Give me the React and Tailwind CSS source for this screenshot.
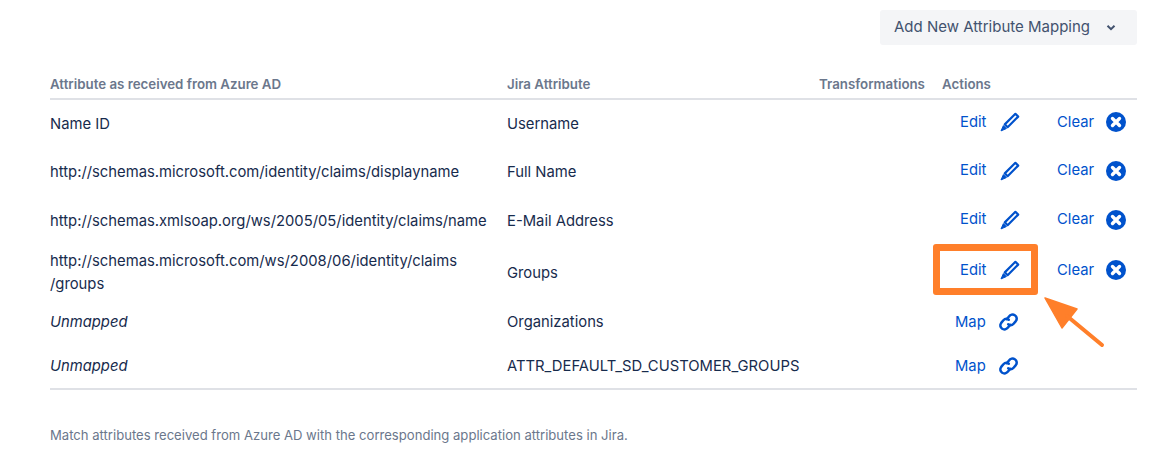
const font = { fontFamily: "Inter, 'Liberation Sans', sans-serif" };

const PencilIcon = () => (
  <svg width="20" height="20" viewBox="0 0 20 20" fill="none" stroke="#0052cc" strokeWidth="2.2" strokeLinejoin="round">
    <path d="M15.4 1.8 L18.2 4.6 L7.6 15.2 L4.8 12.4 Z" />
    <path d="M3.4 13.6 L6.4 16.6 L1 18.9 Z" fill="#0052cc" strokeWidth="1" />
  </svg>
);

const ClearIcon = () => (
  <svg width="20" height="20" viewBox="0 0 20 20">
    <circle cx="10" cy="10" r="10" fill="#0052cc" />
    <path d="M6.5 6.5 L13.5 13.5 M13.5 6.5 L6.5 13.5" stroke="#fff" strokeWidth="3.4" strokeLinecap="round" />
  </svg>
);

const LinkIcon = () => (
  <svg width="21" height="20" viewBox="0 0 21 20" fill="none" stroke="#0052cc" strokeWidth="2.5" strokeLinecap="round">
    <path d="M8.8 7.2 L11 4.4 C12.3 2.7 14.8 2 16.8 3.2 C18.9 4.6 19.3 7.2 17.8 9.1 L15.6 11.7 C14.2 13.3 11.9 13.6 10.2 12.3" />
    <path d="M12.2 12.8 L10 15.6 C8.7 17.3 6.2 18 4.2 16.8 C2.1 15.4 1.7 12.8 3.2 10.9 L5.4 8.3 C6.8 6.7 9.1 6.4 10.8 7.7" />
  </svg>
);

const rows = [
  { from: "Name ID", to: "Username", h: "h-[48px]", pb: "pb-[4px]", mapped: true },
  { from: "http://schemas.microsoft.com/identity/claims/displayname", to: "Full Name", h: "h-[49px]", pb: "pb-[4px]", mapped: true },
  { from: "http://schemas.xmlsoap.org/ws/2005/05/identity/claims/name", to: "E-Mail Address", h: "h-[49px]", pb: "pb-[4px]", mapped: true },
  { from: "http://schemas.microsoft.com/ws/2008/06/identity/claims\n/groups", to: "Groups", h: "h-[54px]", pb: "pb-[6px]", mapped: true },
  { from: "Unmapped", to: "Organizations", h: "h-[44px]", italic: true },
  { from: "Unmapped", to: "ATTR_DEFAULT_SD_CUSTOMER_GROUPS", h: "h-[44px]", italic: true },
];

const App = () => {
  return (
    <div className="relative w-[1171px] h-[460px] bg-white overflow-hidden" style={font}>
      <div className="ml-[50px] w-[1087px] pt-[10px]">
        <div className="flex justify-end">
          <button className="flex items-center w-[257px] h-[35px] pl-[14px] rounded-[3px] bg-[#f4f5f7] text-[#42526e] text-[15px]">
            Add New Attribute Mapping
            <svg className="ml-[16px]" width="10" height="8" viewBox="0 0 10 8" fill="none" stroke="#42526e" strokeWidth="2">
              <path d="M1.5 1.8 L5 5.2 L8.5 1.8" />
            </svg>
          </button>
        </div>

        <div className="flex items-center h-[27px] mt-[26px] text-[13.3px] font-semibold text-[#6b778c] border-b-2 border-[#dfe1e6] box-content">
          <div className="w-[457px]">Attribute as received from Azure AD</div>
          <div className="w-[312px]">Jira Attribute</div>
          <div className="w-[123px]">Transformations</div>
          <div>Actions</div>
        </div>

        {rows.map((row) => (
          <div key={row.to} className={`flex items-center ${row.h} text-[14.8px] leading-[23px] text-[#172b4d]`}>
            <div className={`w-[457px] whitespace-pre-line ${row.italic ? "italic" : ""}`}>{row.from}</div>
            <div className="w-[312px] whitespace-nowrap">{row.to}</div>
            <div className="w-[123px]"></div>
            {row.mapped ? (
              <div className={`flex items-center text-[#0052cc] h-full ${row.pb}`}>
                <span className="ml-[18px] w-[40px]">Edit</span>
                <PencilIcon />
                <span className="ml-[37px] w-[49px]">Clear</span>
                <ClearIcon />
              </div>
            ) : (
              <div className="flex items-center text-[#0052cc] h-full">
                <span className="ml-[13px] w-[43px]">Map</span>
                <LinkIcon />
              </div>
            )}
          </div>
        ))}

        <div className="border-t-2 border-[#dfe1e6] pt-[36px] text-[13.1px] text-[#6b778c]">
          Match attributes received from Azure AD with the corresponding application attributes in Jira.
        </div>
      </div>

      {/* annotation over the Groups row */}
      <div className="absolute left-[933px] top-[244px] w-[105px] h-[51px] rounded-[3px] border-[7px] border-[#ff7f2a]"></div>
      <svg className="absolute left-[1040px] top-[294px]" width="70" height="60" viewBox="0 0 70 60" fill="none">
        <path d="M5 4 L37 15 L22 34 Z" fill="#ff7f2a" stroke="#ff7f2a" strokeWidth="1.5" strokeLinejoin="round" />
        <path d="M27 22 L62 51" stroke="#ff7f2a" strokeWidth="4" strokeLinecap="round" />
      </svg>
    </div>
  );
};

export default App;
